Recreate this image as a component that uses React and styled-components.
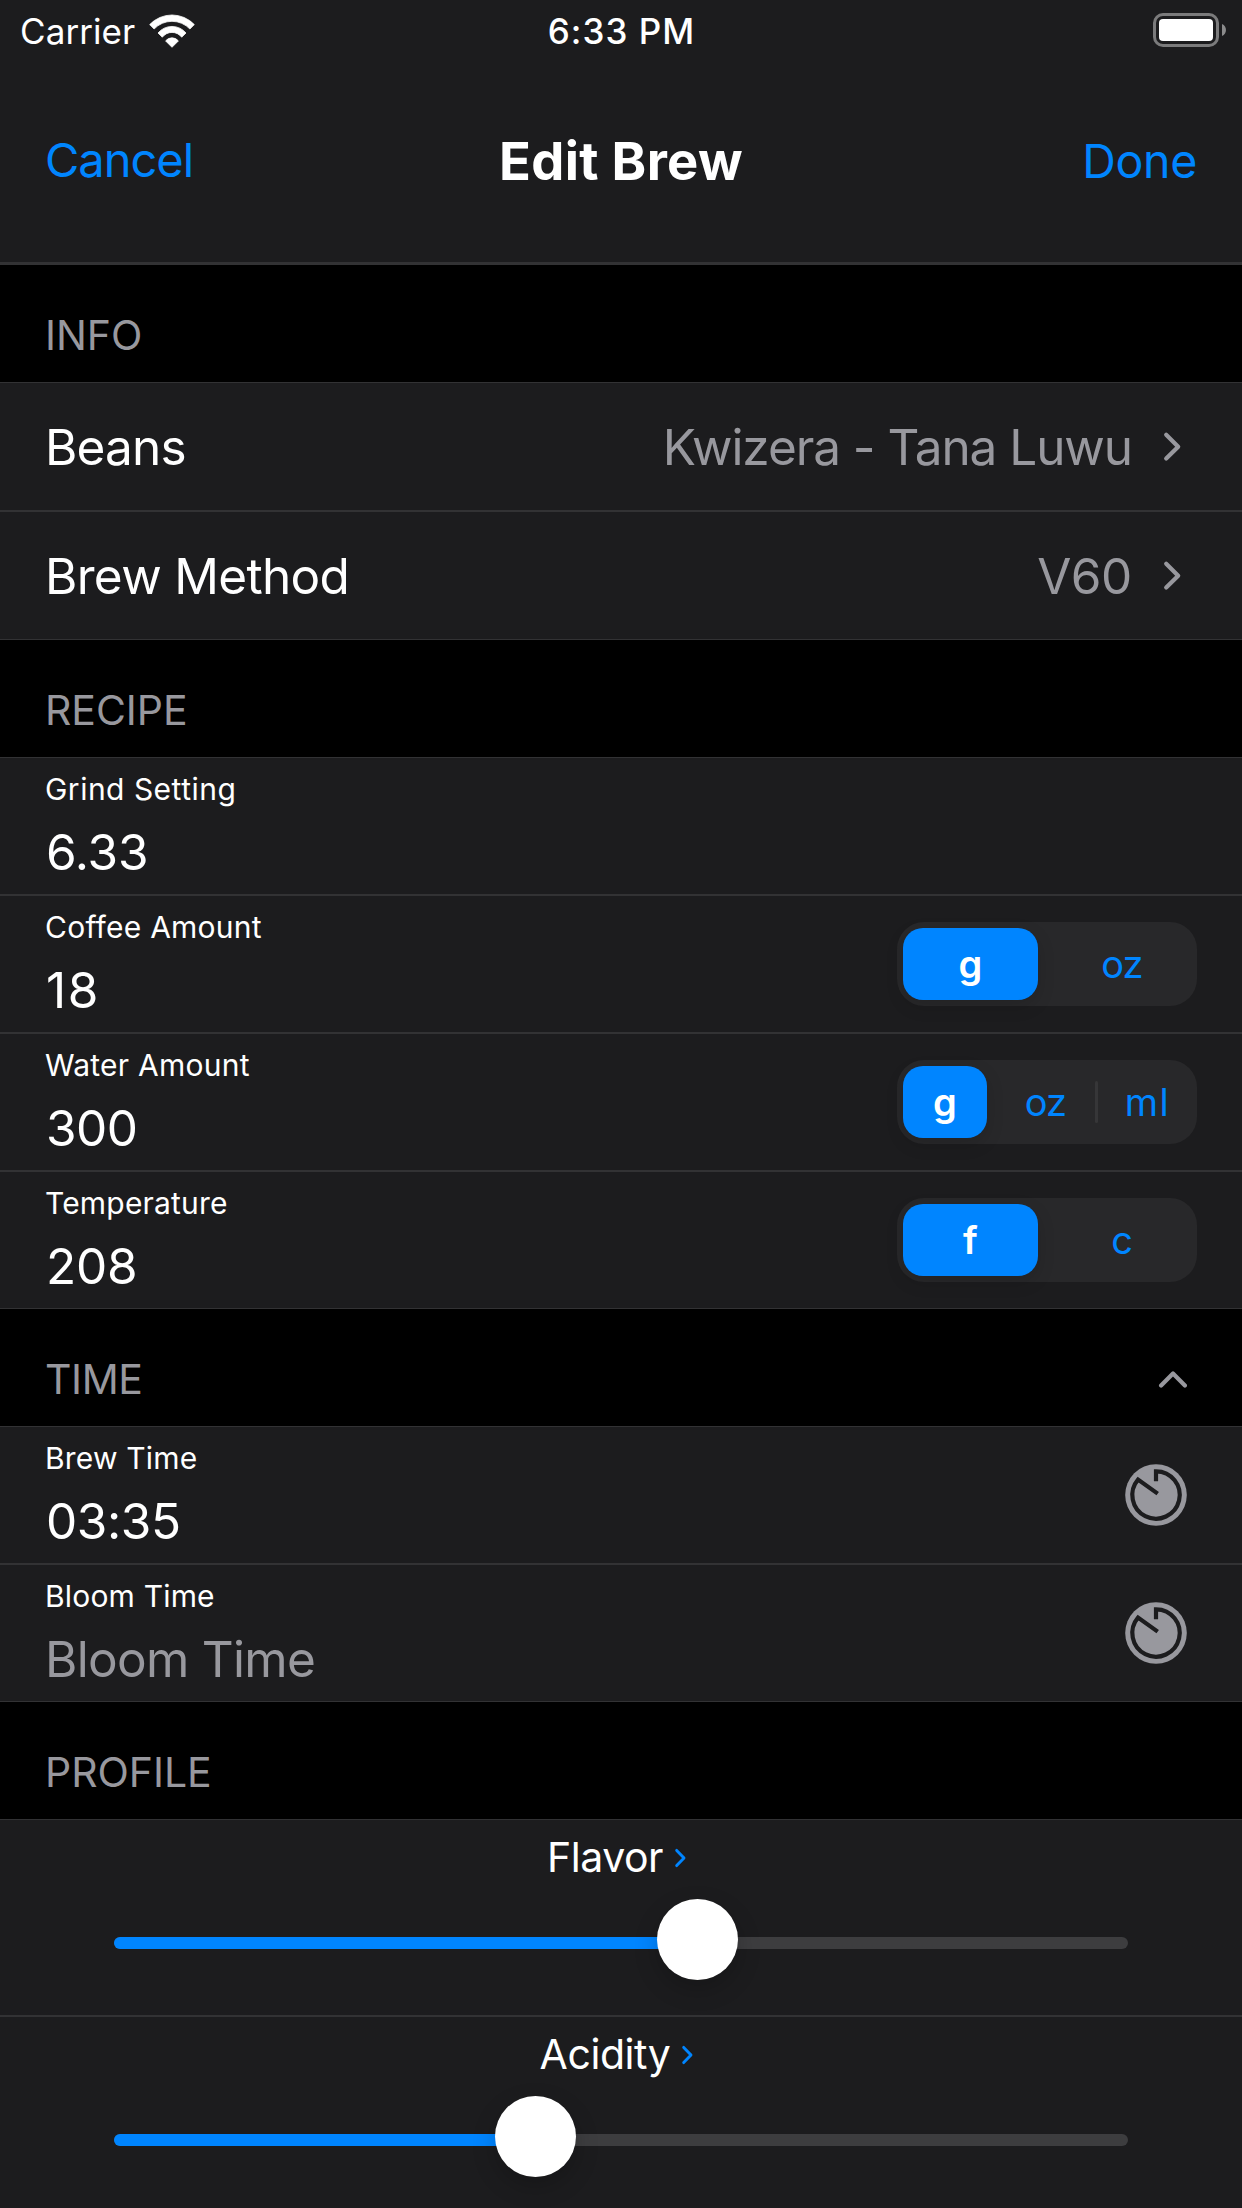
import React from "react";
import styled, { createGlobalStyle } from "styled-components";

const color = {
  surface: "#1c1c1e",
  line: "#323234",
  blue: "#0085ff",
  gray: "#98989e",
  control: "#28282a",
  track: "#3d3d3f",
};

const GlobalStyle = createGlobalStyle`
  *, *::before, *::after { box-sizing: border-box; }
  body {
    margin: 0;
    background: #000;
    color: #fff;
    font-family: Inter, "Liberation Sans", sans-serif;
  }
  button { font-family: inherit; }
`;

const Screen = styled.main`
  width: 1242px;
  height: 2208px;
  overflow: hidden;
  background: #000;
`;

const Header = styled.header`
  height: 265px;
  background: ${color.surface};
  border-bottom: 3px solid ${color.line};
`;

const StatusBar = styled.div`
  display: grid;
  grid-template-columns: 1fr auto 1fr;
  align-items: center;
  height: 60px;
  padding: 2px 16px 0 20px;
  font-size: 35px;
  line-height: 44px;
`;

const CarrierGroup = styled.div`
  display: flex;
  align-items: center;
  gap: 13px;
  letter-spacing: 0.08px;
`;

const Clock = styled.div`
  font-weight: 500;
  letter-spacing: 1.06px;
  padding-right: 3px;
`;

const Battery = styled.div`
  display: flex;
  align-items: center;
  justify-content: flex-end;
  gap: 3px;
  padding-bottom: 2px;
`;

const BatteryShell = styled.div`
  display: flex;
  width: 66px;
  height: 34px;
  padding: 3px;
  border: 3px solid #7b7b7c;
  border-radius: 10px;
`;

const BatteryLevel = styled.div`
  flex: 1;
  border-radius: 4px;
  background: #fff;
`;

const NavBar = styled.nav`
  display: grid;
  grid-template-columns: 1fr auto 1fr;
  align-items: center;
  height: 202px;
  padding: 0 45px;
`;

const NavButton = styled.button`
  justify-self: ${(p) => (p.$end ? "end" : "start")};
  padding: ${(p) => (p.$end ? "0" : "0 0 2px")};
  border: 0;
  background: none;
  color: ${color.blue};
  font-size: ${(p) => (p.$end ? 46.5 : 47)}px;
  line-height: 60px;
  letter-spacing: ${(p) => (p.$end ? -0.3 : -1.01)}px;
`;

const Title = styled.h1`
  margin: 0;
  font-size: 52.5px;
  line-height: 64px;
  font-weight: 700;
  letter-spacing: 0.35px;
`;

const SectionHeader = styled.div`
  display: flex;
  align-items: flex-end;
  justify-content: space-between;
  height: 117px;
  padding: 0 55px 22px 45px;
`;

const SectionTitle = styled.h2`
  margin: 0;
  color: ${color.gray};
  font-size: 41px;
  line-height: 50px;
  font-weight: 400;
  letter-spacing: ${(p) => p.$tracking ?? -0.05}px;
`;

const Cell = styled.div`
  background: ${color.surface};
  border: solid ${color.line};
  border-width: 1px 0;
`;

const LinkCell = styled(Cell)`
  display: flex;
  align-items: center;
  height: 129px;
  padding: 0 60px 0 45px;
  font-size: 49.5px;
  line-height: 60px;
`;

const LinkName = styled.span`
  flex: 1;
  letter-spacing: ${(p) => p.$tracking}px;
`;

const LinkValue = styled.span`
  margin-right: 30px;
  color: ${color.gray};
  letter-spacing: ${(p) => p.$tracking}px;
`;

const FieldCell = styled(Cell)`
  display: flex;
  align-items: center;
  justify-content: space-between;
  height: 138px;
  padding: 0 45px;
`;

const Field = styled.label`
  display: flex;
  flex-direction: column;
  gap: 15px;
  padding-top: 1px;
`;

const FieldName = styled.span`
  font-size: 30px;
  line-height: 36px;
  letter-spacing: ${(p) => p.$tracking ?? 0.18}px;
`;

const FieldValue = styled.span`
  padding-left: ${(p) => (p.$placeholder ? 0 : 1)}px;
  color: ${(p) => (p.$placeholder ? color.gray : "#fff")};
  font-size: 49.5px;
  line-height: 60px;
  letter-spacing: ${(p) => p.$tracking}px;
`;

const Segmented = styled.div`
  display: flex;
  align-items: center;
  width: 300px;
  height: 84px;
  padding-left: 6px;
  border-radius: 27px;
  background: ${color.control};
`;

const Segment = styled.button`
  flex: ${(p) => (p.$selected ? `0 0 ${p.$width}px` : "1 1 0")};
  height: 72px;
  margin-right: ${(p) => (p.$selected ? 9 : 0)}px;
  padding: 0;
  border: 0;
  border-radius: 20px;
  background: ${(p) => (p.$selected ? color.blue : "none")};
  box-shadow: ${(p) => (p.$selected ? "0 6px 18px rgba(0, 0, 0, 0.14)" : "none")};
  color: ${(p) => (p.$selected ? "#fff" : color.blue)};
  font-size: 38px;
  line-height: 72px;
  font-weight: ${(p) => (p.$selected ? 600 : 440)};
  letter-spacing: ${(p) => p.$tracking ?? 0}px;
`;

const Divider = styled.span`
  flex: none;
  width: 3px;
  height: 42px;
  border-radius: 2px;
  background: #363638;
`;

const DialButton = styled.button`
  display: flex;
  margin-right: 10px;
  padding: 0;
  border: 0;
  background: none;
`;

const SliderCell = styled(Cell)`
  height: 197px;
  padding: 12px 114px 0;
`;

const SliderLabel = styled.div`
  display: flex;
  align-items: center;
  justify-content: center;
  gap: 10px;
  height: 50px;
  font-size: 41px;
  line-height: 50px;
  letter-spacing: ${(p) => p.$tracking}px;
`;

const Track = styled.div`
  position: relative;
  height: 12px;
  margin-top: 55px;
  border-radius: 6px;
  background: ${color.track};
`;

const TrackFill = styled.div`
  height: 12px;
  border-radius: 6px;
  background: ${color.blue};
`;

const Thumb = styled.div`
  position: absolute;
  top: -38px;
  width: 81px;
  height: 81px;
  border-radius: 50%;
  background: #fff;
  box-shadow: 0 9px 24px rgba(0, 0, 0, 0.2);
`;

const THUMB = 81;
const TRACK = 1014;

const WifiIcon = () => (
  <svg width="48" height="36" viewBox="0 0 48 36" fill="#fff" stroke="#fff" strokeWidth="0.8" strokeLinejoin="round">
    <path d="M1.7 11.6A30.7 30.7 0 0 1 46.3 11.6L41.9 16A24.7 24.7 0 0 0 6.1 16Z" />
    <path d="M10 20A18.2 18.2 0 0 1 38 20L33.7 24.2A12.2 12.2 0 0 0 14.3 24.2Z" />
    <path d="M17.6 27.9A8.2 8.2 0 0 1 30.4 27.9L24 34.3Z" />
  </svg>
);

const BatteryNub = () => (
  <svg width="4" height="12" viewBox="0 0 4 12">
    <path d="M0 0C5.3 2 5.3 10 0 12Z" fill="#8b8b8c" />
  </svg>
);

const Disclosure = () => (
  <svg width="20" height="32" viewBox="0 0 20 32" fill="none" stroke={color.gray} strokeWidth="4.2" strokeLinecap="round" strokeLinejoin="round">
    <path d="M4.2 3.8L16.2 15.7L4.2 27.6" />
  </svg>
);

const Collapse = () => (
  <svg width="32" height="50" viewBox="0 0 32 50" fill="none" stroke={color.gray} strokeWidth="4.2" strokeLinecap="round" strokeLinejoin="round">
    <path d="M6.1 31.4L18 19.5L29.9 31.4" />
  </svg>
);

const Dial = () => (
  <svg width="62" height="62" viewBox="-31 -31 62 62">
    <circle r="30.8" fill={color.gray} />
    <path d="M0 -13.7V-23.7A23.7 23.7 0 1 1 -18 -15.4L1.7 -1.4" fill="none" stroke={color.surface} strokeWidth="4.2" />
  </svg>
);

const SmallChevron = () => (
  <svg width="22" height="24" viewBox="0 0 22 24" fill="none" stroke={color.blue} strokeWidth="2.9" strokeLinecap="round" strokeLinejoin="round">
    <path d="M3.7 5.4L11 13L3.7 20.6" />
  </svg>
);

const LinkRow = ({ name, value, tracking, valueTracking }) => (
  <LinkCell>
    <LinkName $tracking={tracking}>{name}</LinkName>
    <LinkValue $tracking={valueTracking}>{value}</LinkValue>
    <Disclosure />
  </LinkCell>
);

const FieldRow = ({ name, value, nameTracking, tracking, placeholder, children }) => (
  <FieldCell>
    <Field>
      <FieldName $tracking={nameTracking}>{name}</FieldName>
      <FieldValue $tracking={tracking} $placeholder={placeholder}>{value}</FieldValue>
    </Field>
    {children}
  </FieldCell>
);

const SliderRow = ({ name, value, tracking }) => {
  const left = value * (TRACK - THUMB);
  return (
    <SliderCell>
      <SliderLabel $tracking={tracking}>
        {name}
        <SmallChevron />
      </SliderLabel>
      <Track>
        <TrackFill style={{ width: left + THUMB / 2 }} />
        <Thumb style={{ left }} />
      </Track>
    </SliderCell>
  );
};

export default function App() {
  return (
    <Screen>
      <GlobalStyle />
      <Header>
        <StatusBar>
          <CarrierGroup>
            Carrier
            <WifiIcon />
          </CarrierGroup>
          <Clock>6:33 PM</Clock>
          <Battery>
            <BatteryShell>
              <BatteryLevel />
            </BatteryShell>
            <BatteryNub />
          </Battery>
        </StatusBar>
        <NavBar>
          <NavButton>Cancel</NavButton>
          <Title>Edit Brew</Title>
          <NavButton $end>Done</NavButton>
        </NavBar>
      </Header>

      <SectionHeader>
        <SectionTitle>INFO</SectionTitle>
      </SectionHeader>
      <LinkRow name="Beans" tracking={-0.82} value="Kwizera - Tana Luwu" valueTracking={-1.06} />
      <LinkRow name="Brew Method" tracking={-0.67} value="V60" valueTracking={-0.3} />

      <SectionHeader>
        <SectionTitle>RECIPE</SectionTitle>
      </SectionHeader>
      <FieldRow name="Grind Setting" nameTracking={0.49} value="6.33" tracking={-0.18} />
      <FieldRow name="Coffee Amount" nameTracking={0.24} value="18" tracking={1.6}>
        <Segmented>
          <Segment $selected $width={135}>g</Segment>
          <Segment $tracking={-0.8}>oz</Segment>
        </Segmented>
      </FieldRow>
      <FieldRow name="Water Amount" nameTracking={0.24} value="300" tracking={-0.5}>
        <Segmented>
          <Segment $selected $width={84}>g</Segment>
          <Segment $tracking={-0.8}>oz</Segment>
          <Divider />
          <Segment $tracking={1.4}>ml</Segment>
        </Segmented>
      </FieldRow>
      <FieldRow name="Temperature" value="208" tracking={-0.21}>
        <Segmented>
          <Segment $selected $width={135}>f</Segment>
          <Segment>c</Segment>
        </Segmented>
      </FieldRow>

      <SectionHeader>
        <SectionTitle $tracking={-0.4}>TIME</SectionTitle>
        <Collapse />
      </SectionHeader>
      <FieldRow name="Brew Time" value="03:35" tracking={-0.41}>
        <DialButton aria-label="Start brew timer">
          <Dial />
        </DialButton>
      </FieldRow>
      <FieldRow name="Bloom Time" value="Bloom Time" tracking={-0.7} placeholder>
        <DialButton aria-label="Start bloom timer">
          <Dial />
        </DialButton>
      </FieldRow>

      <SectionHeader>
        <SectionTitle>PROFILE</SectionTitle>
      </SectionHeader>
      <SliderRow name="Flavor" value={0.582} tracking={-0.48} />
      <SliderRow name="Acidity" value={0.4084} tracking={-0.45} />
    </Screen>
  );
}
